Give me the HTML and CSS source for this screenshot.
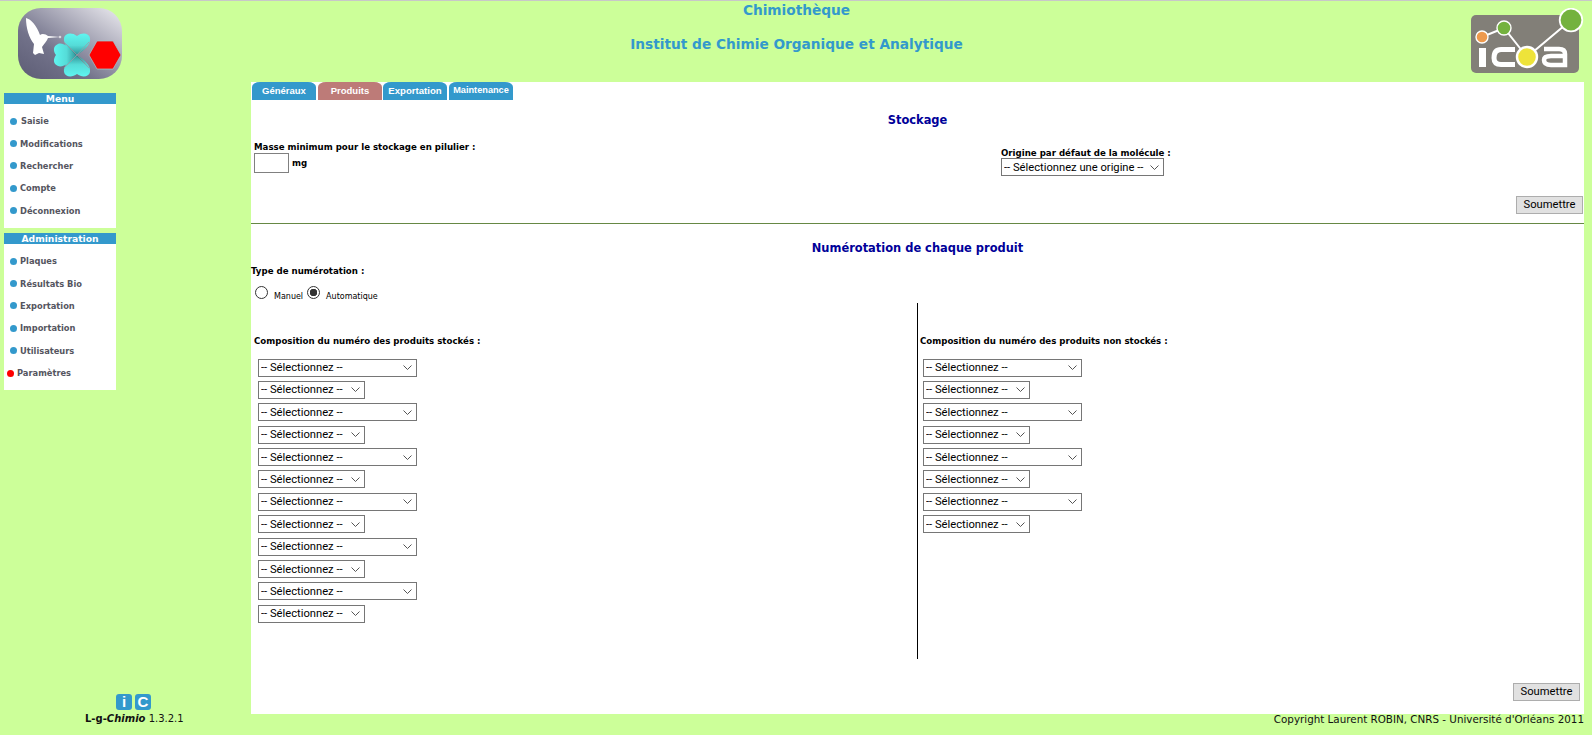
FILE: index.html
```html
<!DOCTYPE html>
<html lang="fr">
<head>
<meta charset="utf-8">
<title>Chimiothèque</title>
<link rel="stylesheet" href="styles.css">
</head>
<body>
<header class="top">
  <svg class="logo-left" width="106" height="72" viewBox="0 0 106 72">
    <defs>
      <linearGradient id="lg" x1="0" y1="1" x2="1" y2="0">
        <stop offset="0" stop-color="#5c5c74"/><stop offset="0.35" stop-color="#72728a"/><stop offset="1" stop-color="#ecebf0"/>
      </linearGradient>
      <linearGradient id="hrt" x1="0" y1="0" x2="0" y2="1">
        <stop offset="0" stop-color="#5ff5f0"/><stop offset="0.55" stop-color="#55dcd8"/><stop offset="1" stop-color="#2f8f94"/>
      </linearGradient>
      <linearGradient id="hrb" x1="0" y1="1" x2="0" y2="0">
        <stop offset="0" stop-color="#5ff5f0"/><stop offset="0.55" stop-color="#55dcd8"/><stop offset="1" stop-color="#2f8f94"/>
      </linearGradient>
      <linearGradient id="hrl" x1="0" y1="0" x2="1" y2="0">
        <stop offset="0" stop-color="#5ff5f0"/><stop offset="0.55" stop-color="#55dcd8"/><stop offset="1" stop-color="#2f8f94"/>
      </linearGradient>
    </defs>
    <rect width="104" height="71" x="1" y="0" rx="23" fill="url(#lg)"/>
    <path d="M9 10 C14 11 20 18 23 27 C25 25 29 26 31 28 L43 29 L31 30 C30 33 27 36 25 39 L27 46 L22 45 L18 47 L16 45 L17 36 C12 30 9 20 9 10Z" fill="#fff"/>
    <circle cx="43" cy="29" r="1.3" fill="#d8d8de"/>
    <path d="M60 47 C52 42 46 36 47 30 C48 25 55 24 60 28 C65 24 72 25 73 30 C74 36 68 42 60 47Z" fill="url(#hrt)"/>
    <path d="M60 47 C52 52 46 58 47 64 C48 69 55 70 60 66 C65 70 72 69 73 64 C74 58 68 52 60 47Z" fill="url(#hrb)"/>
    <path d="M60 47 C54 40 46 34 41 36 C36 38 36 43 39 47 C36 51 36 56 41 58 C46 60 54 54 60 47Z" fill="url(#hrl)"/>
    <path d="M47 34 L60 47 L72 60 M60 47 L72 34 M60 47 L47 60" stroke="#9a9aa8" stroke-width="0.8"/>
    <polygon points="72,47 80,33 96,33 104,47 96,61 80,61" fill="#ff0000" stroke="#9ccdd2" stroke-width="0.7"/>
  </svg>
  <div class="titles">
    <h1 class="title">Chimiothèque</h1>
    <h2 class="title">Institut de Chimie Organique et Analytique</h2>
  </div>
  <svg class="logo-right" width="114" height="66" viewBox="0 0 114 66">
    <rect x="1" y="7" width="108" height="58" rx="5" fill="#827f78"/>
    <path d="M12 29 L34 20 L57 49 L101 12" stroke="#fff" stroke-width="2" fill="none"/>
    <circle cx="12" cy="29" r="6" fill="#ee9a4d" stroke="#fff" stroke-width="1.4"/>
    <circle cx="34" cy="20" r="7" fill="#74b23e" stroke="#fff" stroke-width="1.4"/>
    <rect x="9" y="40" width="7" height="19" fill="#fff"/>
    <path d="M45 41.5 H31 Q24 41.5 24 50 Q24 56.500 31 56.500 H45" stroke="#fff" stroke-width="5" fill="none"/>
    <circle cx="57" cy="49" r="10" fill="#eee33a" stroke="#fff" stroke-width="2.4"/>
    <path d="M74 41 H89 Q95 41 95 46 V57 H81 Q74 57 74 52 Q74 48 81 48 H94" stroke="#fff" stroke-width="4.5" fill="none"/>
    <circle cx="101" cy="12" r="11.300" fill="#74b23e" stroke="#fff" stroke-width="1.800"/>
  </svg>
</header>

<div class="middle">
  <aside class="side">
    <nav class="menu-box">
      <div class="menu-head">Menu</div>
      <ul class="menu">
        <li class="shift"><span class="dot"></span>Saisie</li>
        <li><span class="dot"></span>Modifications</li>
        <li><span class="dot"></span>Rechercher</li>
        <li><span class="dot"></span>Compte</li>
        <li><span class="dot"></span>Déconnexion</li>
      </ul>
    </nav>
    <nav class="menu-box">
      <div class="menu-head">Administration</div>
      <ul class="menu">
        <li><span class="dot"></span>Plaques</li>
        <li><span class="dot"></span>Résultats Bio</li>
        <li><span class="dot"></span>Exportation</li>
        <li><span class="dot"></span>Importation</li>
        <li><span class="dot"></span>Utilisateurs</li>
        <li class="current"><span class="dot red"></span>Paramètres</li>
      </ul>
    </nav>
    <div class="badges"><span class="badge">i</span><span class="badge">C</span></div>
  </aside>

  <main class="panel">
    <div class="tabs">
      <span class="tab t1">Généraux</span>
      <span class="tab t2 active">Produits</span>
      <span class="tab t3">Exportation</span>
      <span class="tab t4">Maintenance</span>
    </div>

    <section class="stock">
      <h3 class="sec-title">Stockage</h3>
      <div class="stock-row">
        <div class="mass">
          <div class="lbl">Masse minimum pour le stockage en pilulier :</div>
          <div class="mass-line"><input class="mass-input" type="text"><span class="lbl">mg</span></div>
        </div>
        <div class="origin">
          <div class="lbl">Origine par défaut de la molécule :</div>
          <select class="sel sel-origin"><option>-- Sélectionnez une origine --</option></select>
        </div>
      </div>
      <div class="submit-row"><button class="btn" type="button">Soumettre</button></div>
    </section>

    <section class="numbering">
      <h3 class="sec-title">Numérotation de chaque produit</h3>
      <div class="lbl type">Type de numérotation :</div>
      <div class="radios">
        <input type="radio" name="n"><span class="small">Manuel</span>
        <input type="radio" name="n" checked><span class="small">Automatique</span>
      </div>
      <div class="cols">
        <div class="col col-left">
          <div class="lbl comp">Composition du numéro des produits stockés :</div>
          <div class="sel-list">
            <select class="sel wide"><option>-- Sélectionnez --</option></select>
            <select class="sel"><option>-- Sélectionnez --</option></select>
            <select class="sel wide"><option>-- Sélectionnez --</option></select>
            <select class="sel"><option>-- Sélectionnez --</option></select>
            <select class="sel wide"><option>-- Sélectionnez --</option></select>
            <select class="sel"><option>-- Sélectionnez --</option></select>
            <select class="sel wide"><option>-- Sélectionnez --</option></select>
            <select class="sel"><option>-- Sélectionnez --</option></select>
            <select class="sel wide"><option>-- Sélectionnez --</option></select>
            <select class="sel"><option>-- Sélectionnez --</option></select>
            <select class="sel wide"><option>-- Sélectionnez --</option></select>
            <select class="sel"><option>-- Sélectionnez --</option></select>
          </div>
        </div>
        <div class="col col-right">
          <div class="lbl comp">Composition du numéro des produits non stockés :</div>
          <div class="sel-list">
            <select class="sel wide"><option>-- Sélectionnez --</option></select>
            <select class="sel"><option>-- Sélectionnez --</option></select>
            <select class="sel wide"><option>-- Sélectionnez --</option></select>
            <select class="sel"><option>-- Sélectionnez --</option></select>
            <select class="sel wide"><option>-- Sélectionnez --</option></select>
            <select class="sel"><option>-- Sélectionnez --</option></select>
            <select class="sel wide"><option>-- Sélectionnez --</option></select>
            <select class="sel"><option>-- Sélectionnez --</option></select>
          </div>
        </div>
      </div>
      <div class="submit-row second"><button class="btn" type="button">Soumettre</button></div>
    </section>
  </main>
</div>

<footer class="foot">
  <div class="version"><b>L-g-<i>Chimio</i></b> 1.3.2.1</div>
  <div class="copy">Copyright Laurent ROBIN, CNRS - Université d'Orléans 2011</div>
</footer>
</body>
</html>
```

FILE: styles.css
```css
* { box-sizing: border-box; }
html, body { margin: 0; height: 100%; }
body {
  width: 1592px;
  height: 735px;
  overflow: hidden;
  background: #ccff99;
  border-top: 1px solid #c8c8c8;
  font-family: "DejaVu Sans", Verdana, sans-serif;
  display: flex;
  flex-direction: column;
  color: #000;
}

/* header */
.top {
  height: 81px;
  flex: none;
  display: flex;
  align-items: flex-start;
  padding: 7px 8px 0 17px;
}
.logo-left, .logo-right { flex: none; }
.titles { flex: 1; text-align: center; margin-top: -7px; }
.title {
  margin: 0;
  color: #3399cc;
  font-size: 13.7px;
  font-weight: bold;
  line-height: 18px;
}
h2.title { margin-top: 16px; }

/* body columns */
.middle { flex: 1; display: flex; min-height: 0; padding-right: 8px; }
.side {
  width: 251px;
  flex: none;
  padding: 11px 0 4px 4px;
  display: flex;
  flex-direction: column;
}
.menu-box { width: 112px; background: #fff; margin-bottom: 5px; }
.menu-head {
  background: #3399cc;
  color: #fff;
  font-size: 9.2px;
  font-weight: bold;
  line-height: 11px;
  text-align: center;
}
.menu { list-style: none; margin: 0; padding: 6px 0; }
.menu li {
  height: 22.4px;
  display: flex;
  align-items: center;
  font-size: 8.3px;
  font-weight: bold;
  color: #555560;
  padding-left: 6px;
}
.dot { width: 7px; height: 7px; border-radius: 50%; background: #3399cc; margin-right: 3px; flex: none; }
.dot.red { background: #ff0000; }
.menu li.shift .dot { margin-right: 4px; }
.menu li.current { padding-left: 3px; }
.badges { margin-top: auto; display: flex; gap: 3px; padding-left: 112px; }
.badge {
  width: 16px; height: 16px;
  background: #3399cc;
  border-radius: 3px;
  color: #fff;
  font: bold 15px/16px "Liberation Sans", sans-serif;
  text-align: center;
}

/* panel */
.panel { flex: 1; background: #fff; display: flex; flex-direction: column; min-width: 0; }
.tabs { display: flex; height: 18px; padding-left: 1px; }
.tab {
  width: 64px;
  height: 18px;
  background: #3399cc;
  color: #fff;
  border-radius: 8px 8px 0 0 / 5px 5px 0 0;
  font: bold 9.5px/17px "Liberation Sans", sans-serif;
  text-align: center;
}
.tab.active { background: #bd7b78; }
.t1 { margin-right: 2px; }
.t2 { margin-right: 1px; }
.t3 { margin-right: 2px; font-size: 9.6px; }
.t4 { font-size: 9.2px; }

.sec-title {
  margin: 0;
  text-align: center;
  color: #000099;
  font-size: 11.45px;
  font-weight: bold;
  line-height: 14px;
}
.lbl { font-size: 8.65px; font-weight: bold; line-height: 12px; }

.stock { height: 124px; border-bottom: 1px solid #668844; padding-top: 13px; display: flex; flex-direction: column; }
.stock-row { display: flex; margin-top: 14px; padding-left: 3px; }
.mass { width: 747px; }
.mass-line { display: flex; align-items: center; }
.mass-input { width: 35px; height: 20px; border: 1px solid #808080; padding: 0; margin: 0 3px 0 0; background: #fff; }
.mass-line .lbl { margin-top: -1px; }
.origin { padding-top: 7px; }
.origin .lbl { line-height: 10px; }
.submit-row { display: flex; justify-content: flex-end; }
.stock .submit-row { margin-top: auto; padding: 0 1px 9px 0; }
.btn {
  width: 67px;
  height: 18px;
  padding: 0;
  background: #e1e1e1;
  border: 1px solid #adadad;
  border-radius: 0;
  font: 11.2px/16px Roboto, sans-serif;
  color: #000;
}

.sel {
  display: block;
  appearance: none;
  width: 107px;
  height: 18px;
  padding: 0 0 0 2px;
  border: 1px solid #767676;
  border-radius: 0;
  background: #fff url("data:image/svg+xml,%3Csvg xmlns='http://www.w3.org/2000/svg' width='9' height='5'%3E%3Cpath d='M.5.5 4.500 4.500 8.500.5' fill='none' stroke='%23555' stroke-width='1'/%3E%3C/svg%3E") no-repeat right 4px center;
  font: 11.2px Roboto, sans-serif;
  color: #000;
}
.sel.wide { width: 159px; }
.sel-origin { width: 163px; }

.numbering { flex: 1; padding-top: 16.5px; display: flex; flex-direction: column; }
.type { margin-top: 10px; }
.radios { display: flex; align-items: flex-start; height: 17px; margin-top: 9px; padding-left: 4px; }
.radios input {
  appearance: none;
  margin: 0 6px 0 0;
  width: 13px;
  height: 13px;
  border: 1px solid #333;
  border-radius: 50%;
  background: #fff;
}
.radios input:checked { background: radial-gradient(circle, #333 0, #333 3.5px, #fff 4px); }
.small { font-size: 8px; line-height: 10px; margin-top: 6px; margin-right: 4px; }
.cols { display: flex; height: 356px; }
.col { height: 100%; padding-top: 32.5px; }
.col-left { width: 667px; padding-left: 3px; border-right: 1px solid #000; }
.col-right { flex: 1; padding-left: 2px; }
.sel-list { display: flex; flex-direction: column; gap: 4.4px; margin-top: 11.5px; padding-left: 4px; }
.col-right .sel-list { padding-left: 3px; }
.second { padding: 24px 4px 0 0; }

/* footer */
.foot {
  flex: none;
  height: 21px;
  display: flex;
  justify-content: space-between;
  padding: 0 8px 0 85px;
  font-size: 10px;
  line-height: 10px;
  color: #111;
}
.copy { font-size: 10.35px; }
```
